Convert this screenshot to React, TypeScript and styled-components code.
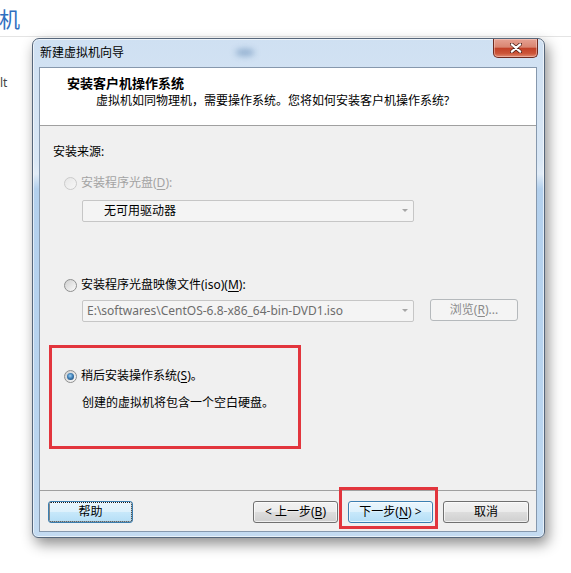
import React from "react";
import styled, { createGlobalStyle } from "styled-components";

const GlobalStyle = createGlobalStyle`
  html, body {
    margin: 0;
    padding: 0;
    background: #fff;
  }
  body {
    font-family: "Noto Sans", "Noto Sans CJK SC", sans-serif;
    font-size: 12px;
    color: #000;
  }
  u {
    text-underline-offset: 2px;
  }
`;

const Page = styled.div`
  width: 571px;
  height: 573px;
  overflow: hidden;
`;

const TopStrip = styled.div`
  height: 36px;
  border-bottom: 1px solid #e4e4e4;
  display: flex;
  align-items: center;
`;

const PageTitle = styled.span`
  font-family: "Noto Sans CJK SC", sans-serif;
  font-size: 21px;
  line-height: 1;
  color: #2f6fc0;
  margin-left: -1px;
`;

const Body = styled.div`
  display: flex;
`;

const Side = styled.div`
  width: 32px;
  padding-top: 39px;
  font-size: 12px;
  line-height: 14px;
  color: #444;
`;

const Window = styled.div`
  position: relative;
  width: 513px;
  height: 500px;
  margin-top: 1px;
  box-sizing: border-box;
  padding: 0 7px 5px 6px;
  display: flex;
  flex-direction: column;
  border: 1px solid #56667a;
  border-radius: 7px 7px 6px 6px;
  background: linear-gradient(
    to bottom,
    #cfe0f2 0px,
    #d9e7f5 120px,
    #e1ecf7 135px,
    #b3d0ed 150px,
    #bad5ef 400px,
    #c4dbf1 100%
  );
  box-shadow: inset 0 0 0 1px rgba(255, 255, 255, 0.6),
    3px 6px 14px rgba(0, 0, 0, 0.45);
`;

const TitleBar = styled.div`
  position: relative;
  height: 28px;
  display: flex;
  justify-content: space-between;
  align-items: flex-start;

  &::after {
    content: "";
    position: absolute;
    left: 196px;
    top: 10px;
    width: 20px;
    height: 7px;
    border-radius: 50%;
    background: #7d9fc4;
    filter: blur(3px);
    opacity: 0.8;
  }
`;

const TitleText = styled.span`
  margin-left: 1px;
  line-height: 28px;
  font-size: 12px;
  color: #000;
`;

const CloseButton = styled.div`
  width: 45px;
  height: 19px;
  margin-right: -1px;
  box-sizing: border-box;
  border: 1px solid #6e2a20;
  border-top: none;
  border-radius: 0 0 5px 5px;
  background: linear-gradient(
    to bottom,
    #e6a192 0%,
    #d98571 45%,
    #c24128 52%,
    #cc5538 80%,
    #e08a72 100%
  );
  box-shadow: inset 0 0 0 1px rgba(255, 220, 210, 0.45);
  display: flex;
  align-items: center;
  justify-content: center;
`;

const Client = styled.div`
  flex: 1;
  display: flex;
  flex-direction: column;
  border: 1px solid #8698ad;
  background: #f0f0f0;
`;

const Header = styled.div`
  height: 57px;
  box-sizing: content-box;
  background: #fff;
  border-bottom: 1px solid #a0a0a0;
  padding-left: 27px;
`;

const HeaderTitle = styled.div`
  margin-top: 7px;
  font-family: "Noto Sans CJK SC", sans-serif;
  font-weight: 700;
  font-size: 13px;
  line-height: 16px;
`;

const HeaderSub = styled.div`
  margin-top: 2px;
  margin-left: 29px;
  line-height: 16px;
`;

const Content = styled.div`
  flex: 1;
  padding: 18px 0 0 13px;
`;

const Label = styled.div`
  line-height: 16px;
`;

const Choice = styled.div<{ $gap: number; $disabled?: boolean }>`
  margin-top: ${(p) => p.$gap}px;
  margin-left: 11px;
  display: flex;
  align-items: center;
  gap: 4px;
  line-height: 16px;
  color: ${(p) => (p.$disabled ? "#a3a3a3" : "#000")};
`;

const Radio = styled.span<{ $checked?: boolean; $disabled?: boolean }>`
  position: relative;
  flex: none;
  width: 13px;
  height: 13px;
  box-sizing: border-box;
  border-radius: 50%;
  border: 1px solid ${(p) => (p.$disabled ? "#cacaca" : "#8e8f8f")};
  background: ${(p) =>
    p.$disabled
      ? "linear-gradient(135deg, #e6e6e6, #f7f7f7)"
      : "linear-gradient(135deg, #cfcfcf, #fbfbfb)"};

  &::after {
    content: "";
    position: absolute;
    inset: 2px;
    border-radius: 50%;
    background: ${(p) =>
      p.$checked
        ? "radial-gradient(circle at 45% 40%, #9fd2f5 0%, #3f7fb6 45%, #173a5e 100%)"
        : "transparent"};
  }
`;

const FieldRow = styled.div<{ $gap: number }>`
  margin-top: ${(p) => p.$gap}px;
  margin-left: 29px;
  display: flex;
  align-items: flex-start;
  gap: 16px;
`;

const Combo = styled.div<{ $muted?: boolean; $indent: number }>`
  position: relative;
  width: 332px;
  height: 22px;
  margin-top: ${(p) => (p.$muted ? 1 : 0)}px;
  box-sizing: border-box;
  border: 1px solid #c6c6c6;
  border-radius: 2px;
  background: #f4f4f4;
  padding-left: ${(p) => p.$indent}px;
  line-height: 20px;
  color: ${(p) => (p.$muted ? "#6d6d6d" : "#000")};
  font-size: 12px;

  &::after {
    content: "";
    position: absolute;
    right: 5px;
    top: 8px;
    border-left: 3px solid transparent;
    border-right: 3px solid transparent;
    border-top: 3px solid #a6a6a6;
  }
`;

const BrowseButton = styled.div`
  width: 88px;
  height: 22px;
  box-sizing: border-box;
  border: 1px solid #b5b9bc;
  border-radius: 3px;
  background: #f4f4f4;
  color: #8a8a8a;
  text-align: center;
  line-height: 20px;
`;

const Highlight = styled.div`
  margin-top: 23px;
  margin-left: -4px;
  width: 252px;
  height: 104px;
  box-sizing: border-box;
  border: 3px solid #e2353d;
  padding-top: 20px;

  ${Choice} {
    margin-left: 12px;
  }
`;

const Note = styled.div`
  margin-top: 11px;
  margin-left: 30px;
  line-height: 16px;
`;

const Footer = styled.div`
  height: 41px;
  box-sizing: border-box;
  border-top: 1px solid #a0a0a0;
  padding: 10px 7px 0 8px;
  display: flex;
  align-items: flex-start;
`;

const Spacer = styled.div`
  flex: 1;
`;

const Button = styled.div<{ $primary?: boolean; $focus?: boolean; $w?: number }>`
  position: relative;
  width: ${(p) => p.$w ?? 85}px;
  height: 22px;
  box-sizing: border-box;
  border-radius: 3px;
  border: 1px solid ${(p) => (p.$primary ? "#3c7fb1" : "#707070")};
  background: ${(p) =>
    p.$primary
      ? "linear-gradient(to bottom, #eaf6fd 0%, #dcf1fc 50%, #c7e8fa 52%, #b4def6 100%)"
      : "linear-gradient(to bottom, #f2f2f2 0%, #ebebeb 50%, #dddddd 52%, #cfcfcf 100%)"};
  box-shadow: inset 0 0 0 1px rgba(255, 255, 255, 0.65);
  text-align: center;
  line-height: 20px;
  outline: ${(p) => (p.$focus ? "1px dotted #1b1b1b" : "none")};
  outline-offset: -2px;
`;

const Marked = styled.div`
  position: relative;
  margin-left: 10px;

  &::before {
    content: "";
    position: absolute;
    left: -9px;
    right: -5px;
    top: -14px;
    bottom: -6px;
    border: 3px solid #e2353d;
    pointer-events: none;
  }
`;

const Gap = styled.div<{ $w: number }>`
  width: ${(p) => p.$w}px;
  flex: none;
`;

const CloseGlyph = () => (
  <svg width="12" height="10" viewBox="0 0 12 10">
    <path
      d="M1.5 1 L10.5 9 M10.5 1 L1.5 9"
      stroke="#4a1a12"
      strokeWidth="3.6"
      strokeLinecap="round"
    />
    <path
      d="M1.8 1.3 L10.2 8.7 M10.2 1.3 L1.8 8.7"
      stroke="#ffffff"
      strokeWidth="2.2"
      strokeLinecap="round"
    />
  </svg>
);

const App = () => {
  return (
    <Page>
      <GlobalStyle />
      <TopStrip>
        <PageTitle>机</PageTitle>
      </TopStrip>
      <Body>
        <Side>lt</Side>
        <Window>
          <TitleBar>
            <TitleText>新建虚拟机向导</TitleText>
            <CloseButton>
              <CloseGlyph />
            </CloseButton>
          </TitleBar>
          <Client>
            <Header>
              <HeaderTitle>安装客户机操作系统</HeaderTitle>
              <HeaderSub>虚拟机如同物理机，需要操作系统。您将如何安装客户机操作系统?</HeaderSub>
            </Header>
            <Content>
              <Label>安装来源:</Label>
              <Choice $gap={15} $disabled>
                <Radio $disabled />
                <span>
                  安装程序光盘(<u>D</u>):
                </span>
              </Choice>
              <FieldRow $gap={9}>
                <Combo $indent={21}>无可用驱动器</Combo>
              </FieldRow>
              <Choice $gap={55}>
                <Radio />
                <span>
                  安装程序光盘映像文件(iso)(<u>M</u>):
                </span>
              </Choice>
              <FieldRow $gap={6}>
                <Combo $muted $indent={4}>
                  E:\softwares\CentOS-6.8-x86_64-bin-DVD1.iso
                </Combo>
                <BrowseButton>
                  浏览(<u>R</u>)...
                </BrowseButton>
              </FieldRow>
              <Highlight>
                <Choice $gap={0}>
                  <Radio $checked />
                  <span>
                    稍后安装操作系统(<u>S</u>)。
                  </span>
                </Choice>
                <Note>创建的虚拟机将包含一个空白硬盘。</Note>
              </Highlight>
            </Content>
            <Footer>
              <Button $primary $focus>
                帮助
              </Button>
              <Spacer />
              <Button>
                &lt; 上一步(<u>B</u>)
              </Button>
              <Marked>
                <Button $primary>
                  下一步(<u>N</u>) &gt;
                </Button>
              </Marked>
              <Gap $w={10} />
              <Button $w={86}>取消</Button>
            </Footer>
          </Client>
        </Window>
      </Body>
    </Page>
  );
};

export default App;
